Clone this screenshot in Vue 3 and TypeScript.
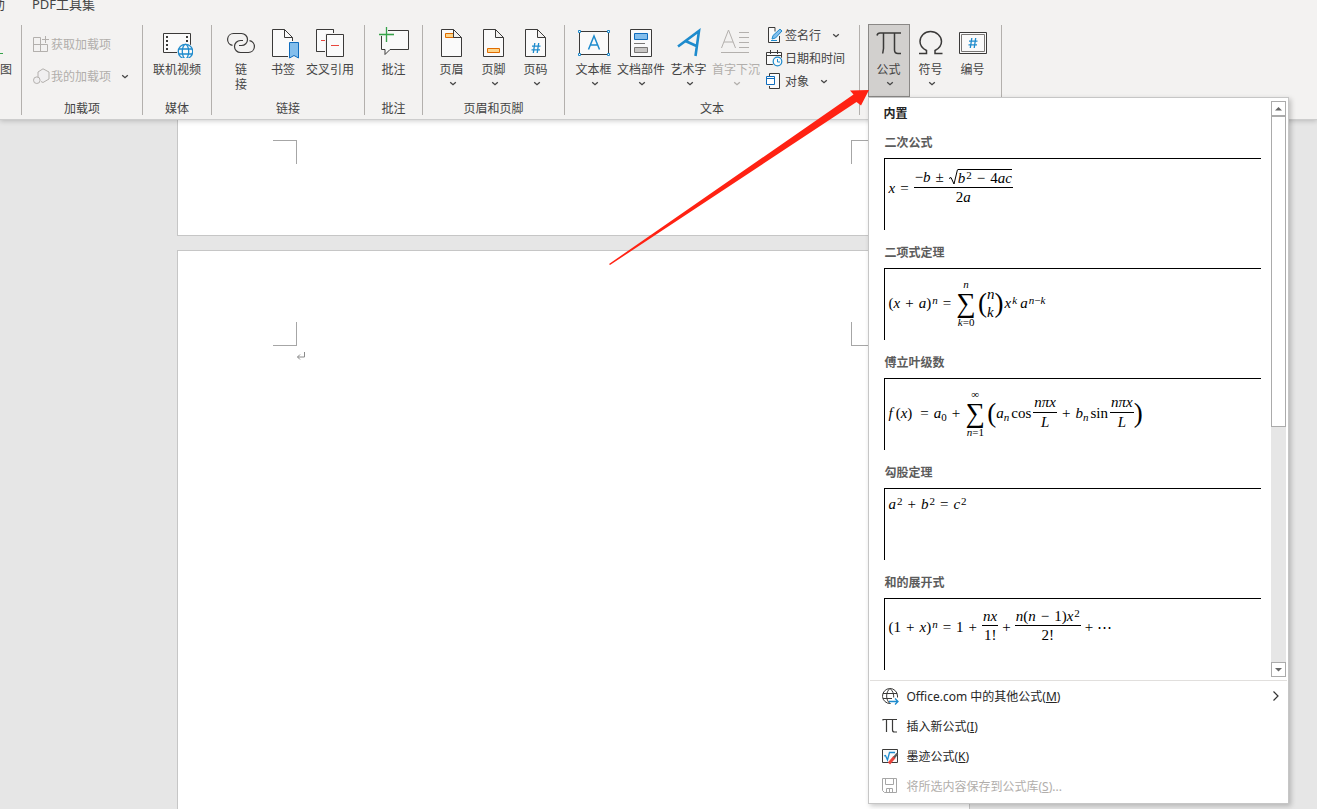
<script setup lang="ts">
import { ref } from 'vue'

interface Tool {
  id: string
  label: string
  size: 's' | 'm' | 'l' | 'xl'
  arrow?: boolean
  disabled?: boolean
  wrap?: boolean
}
interface RowTool {
  id: string
  label: string
  arrow?: boolean
  disabled?: boolean
}
interface Group {
  name: string
  kind: string
  tools: Tool[]
  rows: RowTool[]
}

const groups: Group[] = [
  {
    name: '加载项',
    kind: 'addins',
    tools: [],
    rows: [
      { id: 'store', label: '获取加载项', disabled: true },
      { id: 'myaddins', label: '我的加载项', disabled: true, arrow: true },
    ],
  },
  { name: '媒体', kind: 'media', tools: [{ id: 'video', label: '联机视频', size: 'xl' }], rows: [] },
  {
    name: '链接',
    kind: 'links',
    tools: [
      { id: 'link', label: '链接', size: 's', wrap: true },
      { id: 'bookmark', label: '书签', size: 's' },
      { id: 'crossref', label: '交叉引用', size: 'xl' },
    ],
    rows: [],
  },
  { name: '批注', kind: 'comments', tools: [{ id: 'comment', label: '批注', size: 's' }], rows: [] },
  {
    name: '页眉和页脚',
    kind: 'headers',
    tools: [
      { id: 'header', label: '页眉', size: 's', arrow: true },
      { id: 'footer', label: '页脚', size: 's', arrow: true },
      { id: 'pageno', label: '页码', size: 's', arrow: true },
    ],
    rows: [],
  },
  {
    name: '文本',
    kind: 'text',
    tools: [
      { id: 'textbox', label: '文本框', size: 'm', arrow: true },
      { id: 'parts', label: '文档部件', size: 'l', arrow: true },
      { id: 'wordart', label: '艺术字', size: 'm', arrow: true },
      { id: 'dropcap', label: '首字下沉', size: 'l', arrow: true, disabled: true },
    ],
    rows: [
      { id: 'signature', label: '签名行', arrow: true },
      { id: 'datetime', label: '日期和时间' },
      { id: 'object', label: '对象', arrow: true },
    ],
  },
]

const symbolTools: Tool[] = [
  { id: 'omega', label: '符号', size: 's', arrow: true },
  { id: 'number', label: '编号', size: 's' },
]

const open = ref(true)
</script>

<template>
  <div class="app">
    <svg class="defs" aria-hidden="true">
      <symbol id="i-store" viewBox="0 0 17 17">
        <g fill="none" stroke="#b3b0ad">
          <path d="M.5 1.5h7v14h-7zM.5 8.5h14v7h-14zM12.5 0v7M9 3.5h7" />
        </g>
      </symbol>
      <symbol id="i-myaddins" viewBox="0 0 17 17">
        <g fill="#f0eff0" stroke="#b3b0ad">
          <path d="M5 9V4l5-3.2 6 3.2v7l-6 3.5-2-1" />
          <circle cx="3.8" cy="12.2" r="3.3" />
        </g>
      </symbol>
      <symbol id="i-video" viewBox="0 0 32 32">
        <path d="M2.5 7.5h27v19h-27z" fill="#fafafa" stroke="#3b3a39" />
        <path d="M6 10v16M26 10v8" fill="none" stroke="#3b3a39" stroke-width="2" stroke-dasharray="2 2" />
        <circle cx="24.5" cy="25.5" r="8.6" fill="#f3f2f1" />
        <g fill="#fafafa" stroke="#1e8bcd" stroke-width="1.3">
          <circle cx="24.5" cy="25.5" r="7.2" />
          <ellipse cx="24.5" cy="25.5" rx="3.2" ry="7.2" />
          <path d="M18 23h13M18 28h13" />
        </g>
      </symbol>
      <symbol id="i-link" viewBox="0 0 32 32">
        <g fill="none" stroke="#3b3a39" stroke-width="1.2">
          <path d="M7.5 19.4A6 6 0 0 1 8.5 7.5h8a6 6 0 0 1 0 12H14" />
          <path d="M24.5 14.6a6 6 0 0 1-1 11.9h-8a6 6 0 0 1 0-12H18" />
        </g>
      </symbol>
      <symbol id="i-bookmark" viewBox="0 0 32 32" overflow="visible">
        <path d="M5.5 3.5h12l8 8v19h-20z" fill="#fafafa" />
        <path d="M21 30.5H5.5V3.5h12l8 8V15M17.5 3.5v8h8" fill="none" stroke="#3b3a39" />
        <path d="M22.5 16.5h9V32l-4.500-2.500-4.500 2.500z" fill="#83beec" stroke="#0f6cbd" />
      </symbol>
      <symbol id="i-crossref" viewBox="0 0 32 32">
        <path d="M2.5 3.5h17v22h-17z" fill="#fafafa" stroke="#3b3a39" />
        <path d="M7 14.5h4" stroke="#e8453c" />
        <path d="M11 7h21v25H11z" fill="#f3f2f1" />
        <path d="M2.5 25.5h8.500M19.5 7V3.5" stroke="#3b3a39" />
        <path d="M12.5 8.5h17v22h-17z" fill="#fafafa" stroke="#3b3a39" />
        <path d="M17 19.5h8" stroke="#e8453c" />
      </symbol>
      <symbol id="i-comment" viewBox="0 0 32 32">
        <path d="M3.5 4.5h27v19H12l-5 5v-5H3.5z" fill="#fafafa" stroke="#3b3a39" />
        <path d="M1 3h6v-2h3v6h6v3h-6v6H7v-6H1z" fill="#f3f2f1" />
        <path d="M8.5 1v15M1 8.5h15" stroke="#36a34a" stroke-width="1.3" />
      </symbol>
      <symbol id="i-page" viewBox="0 0 32 32">
        <path d="M5.5 3.5h12l8 8v19h-20zM17.5 3.5v8h8" fill="#fafafa" stroke="#3b3a39" />
      </symbol>
      <symbol id="i-hash" viewBox="0 0 10 10">
        <path d="M3.8 0 2.3 10M7.7 0 6.2 10M1 3.2h8.500M.5 6.8H9" fill="none" stroke="#1e8bcd" stroke-width="1.3" />
      </symbol>
      <symbol id="i-header" viewBox="0 0 32 32">
        <use href="#i-page" width="32" height="32" />
        <path d="M9.5 7.5h8v4h-8z" fill="#fdd58b" stroke="#e06c00" />
        <path d="M17.5 4v7.500H22" fill="none" stroke="#3b3a39" />
      </symbol>
      <symbol id="i-footer" viewBox="0 0 32 32">
        <use href="#i-page" width="32" height="32" />
        <path d="M9.5 22.5h12v4h-12z" fill="#fdd58b" stroke="#e06c00" />
      </symbol>
      <symbol id="i-pageno" viewBox="0 0 32 32">
        <use href="#i-page" width="32" height="32" />
        <use href="#i-hash" x="11" y="17" width="10" height="10" />
      </symbol>
      <symbol id="i-textbox" viewBox="0 0 32 32">
        <path d="M1.5 5.5h29v23h-29z" fill="#fafafa" stroke="#3b3a39" />
        <path d="M10.5 23.5 16 10l5.500 13.500M12.5 19h7" fill="none" stroke="#1e8bcd" stroke-width="1.5" />
        <path d="M.5 4.5h2v2h-2zM29.5 4.5h2v2h-2zM.5 27.5h2v2h-2zM29.5 27.5h2v2h-2z" fill="#fff" stroke="#1e8bcd" />
      </symbol>
      <symbol id="i-parts" viewBox="0 0 32 32">
        <path d="M5.5 3.5h21v27h-21z" fill="#fafafa" stroke="#3b3a39" />
        <path d="M9.5 7.5h13v6h-13z" fill="#83beec" stroke="#0f6cbd" />
        <path d="M9 17.5h11" stroke="#797775" />
        <path d="M9.5 21.5h13v5h-13z" fill="#c8c6c4" stroke="#797775" />
      </symbol>
      <symbol id="i-wordart" viewBox="0 0 32 32">
        <path d="M5 20.5 26 5l-3.500 25M12.5 15l11 5" fill="none" stroke="#1e8bcd" stroke-width="2.6" />
      </symbol>
      <symbol id="i-dropcap" viewBox="0 0 32 32">
        <path d="M1.5 22 8.500 4l7 18M4 16h9M19 6.5h10M19 11.5h10M19 16.5h10M19 21.5h10M1 26.5h28" fill="none" stroke="#b3b0ad" />
      </symbol>
      <symbol id="i-signature" viewBox="0 0 17 17">
        <path d="M9 .5H2.500v15h11V9M9 .5v4" fill="#fafafa" stroke="#3b3a39" />
        <path d="M5 13.5h6" stroke="#1e8bcd" />
        <path d="m6 12 1-3.500L14 2l2 2-6.500 7z" fill="#83beec" stroke="#1e8bcd" />
      </symbol>
      <symbol id="i-datetime" viewBox="0 0 17 17">
        <path d="M.5 2.500h15v12H.5zM.5 5.500h15M4.500 0v4M11.500 0v4" fill="#fafafa" stroke="#3b3a39" />
        <circle cx="11.5" cy="11.5" r="5.5" fill="#f3f2f1" />
        <circle cx="11.5" cy="11.5" r="4.3" fill="#fafafa" stroke="#1e8bcd" stroke-width="1.2" />
        <path d="M11.5 9v3H14" fill="none" stroke="#1e8bcd" />
      </symbol>
      <symbol id="i-object" viewBox="0 0 17 17">
        <path d="M3.5 3V.5h10v15h-10V13" fill="#fafafa" stroke="#3b3a39" />
        <path d="M.5 3.500h8v8h-8zM.5 5.500h8" fill="#fff" stroke="#0f6cbd" />
      </symbol>
      <symbol id="i-pi" viewBox="0 0 32 32">
        <path d="M4 9.500q.5-2.500 3-2.500H28M10.5 7.500v15l-.8 5M21.5 7.500V24q0 3.500 3.500 3.500h3" fill="none" stroke="#3b3a39" stroke-width="1.5" />
      </symbol>
      <symbol id="i-omega" viewBox="0 0 32 32">
        <path d="M4 27.500h7.500v-3C7.500 22.500 5 19 5 15.500 5 10 9.500 5.500 15.500 5.500S26.500 10 26.500 15.500c0 3.500-2.500 7-6.500 9v3h7.500" fill="none" stroke="#3b3a39" stroke-width="1.5" />
      </symbol>
      <symbol id="i-number" viewBox="0 0 32 32">
        <path d="M2.5 6.5h27v21h-27z" fill="#fafafa" stroke="#3b3a39" />
        <path d="M4.5 8.5h23v17h-23z" fill="#fafafa" stroke="#797775" />
        <use href="#i-hash" x="11" y="12" width="10" height="10" />
      </symbol>
      <symbol id="i-chev" viewBox="0 0 8 5">
        <path d="M1.2 1.2 4 3.7l2.800-2.500" fill="none" stroke="currentColor" stroke-width="1.3" />
      </symbol>
    </svg>

    <header class="ribbon">
      <nav class="tabs">
        <a class="tab cut" href="#help"><span>助</span></a>
        <a class="tab" href="#pdf">PDF工具集</a>
      </nav>
      <div class="groups">
        <section class="group partial">
          <div class="tools">
            <button class="tool cut-tool" type="button">
              <svg class="big" viewBox="0 0 32 32"><path d="M12 27.5h11" stroke="#36a34a" /></svg>
              <span class="label">图</span>
            </button>
          </div>
        </section>
        <template v-for="g in groups" :key="g.name">
          <i class="sep"></i>
          <section class="group" :class="g.kind" :aria-label="g.name">
            <div class="tools">
              <button
                v-for="t in g.tools"
                :key="t.id"
                class="tool"
                :class="['w-' + t.size, { wrap: t.wrap }]"
                type="button"
                :disabled="t.disabled"
              >
                <svg class="big"><use :href="'#i-' + t.id" /></svg>
                <span class="label">{{ t.label }}</span>
                <svg v-if="t.arrow" class="chev"><use href="#i-chev" /></svg>
              </button>
              <div v-if="g.rows.length" class="rows">
                <button v-for="r in g.rows" :key="r.id" class="row" type="button" :disabled="r.disabled">
                  <svg class="small"><use :href="'#i-' + r.id" /></svg>
                  <span class="label">{{ r.label }}</span>
                  <svg v-if="r.arrow" class="chev"><use href="#i-chev" /></svg>
                </button>
              </div>
            </div>
            <div class="caption">{{ g.name }}</div>
          </section>
        </template>
        <i class="sep"></i>
        <section class="group symbols" aria-label="符号">
          <div class="tools">
            <div class="anchor">
              <button class="tool w-s active" type="button" :aria-expanded="open" @click="open = !open">
                <svg class="big"><use href="#i-pi" /></svg>
                <span class="label">公式</span>
                <svg class="chev"><use href="#i-chev" /></svg>
              </button>

              <div v-if="open" class="menu">
                <div class="gallery">
                  <div class="list">
                    <h2>内置</h2>

                    <h3>二次公式</h3>
                    <div class="eq e1">
                      <div class="math">
                        <em>x</em><b>=</b>
                        <span class="frac">
                          <span class="part"><span>−<em>b</em></span><b>±</b>
                            <svg class="root" viewBox="0 0 9 16"><path d="M0 9.500 2 8.500l3 6.500L8.500.5" fill="none" stroke="#000" /></svg>
                            <span class="under"><span><em>b</em><sup>2</sup></span><b>−</b><span>4<em>ac</em></span></span>
                          </span>
                          <span class="part den">2<em>a</em></span>
                        </span>
                      </div>
                    </div>

                    <h3>二项式定理</h3>
                    <div class="eq e2">
                      <div class="math">
                        <span>(<em>x</em></span><b>+</b><span><em>a</em>)<sup><em>n</em></sup></span><b>=</b>
                        <span class="sum"><em class="lim">n</em><span class="sigma">∑</span><span class="lim"><em>k</em>=0</span></span>
                        <span class="paren open">(</span>
                        <span class="binom"><em>n</em><em>k</em></span>
                        <span class="paren">)</span>
                        <span class="tail"><em>x</em><sup><em>k</em></sup><em>&#8201;a</em><sup><em>n</em>−<em>k</em></sup></span>
                      </div>
                    </div>

                    <h3>傅立叶级数</h3>
                    <div class="eq e3">
                      <div class="math">
                        <span class="fn"><em>f</em>&#8201;(<em>x</em>)</span><b>=</b><span><em>a</em><sub>0</sub></span><b>+</b>
                        <span class="sum"><span class="lim">∞</span><span class="sigma">∑</span><span class="lim"><em>n</em>=1</span></span>
                        <span class="paren open">(</span>
                        <span><em>a</em><sub><em>n</em></sub></span><span class="word">cos</span>
                        <span class="frac"><span class="part"><em>nπx</em></span><span class="part den"><em>L</em></span></span>
                        <b>+</b><span><em>b</em><sub><em>n</em></sub></span><span class="word">sin</span>
                        <span class="frac"><span class="part"><em>nπx</em></span><span class="part den"><em>L</em></span></span>
                        <span class="paren">)</span>
                      </div>
                    </div>

                    <h3>勾股定理</h3>
                    <div class="eq e4">
                      <div class="math">
                        <span><em>a</em><sup>2</sup></span><b>+</b><span><em>b</em><sup>2</sup></span><b>=</b><span><em>c</em><sup>2</sup></span>
                      </div>
                    </div>

                    <h3>和的展开式</h3>
                    <div class="eq e5">
                      <div class="math">
                        <span>(1</span><b>+</b><span><em>x</em>)<sup><em>n</em></sup></span><b>=</b><span>1</span><b>+</b>
                        <span class="frac"><span class="part"><em>nx</em></span><span class="part den">1!</span></span>
                        <b class="thin">+</b>
                        <span class="frac">
                          <span class="part"><span><em>n</em>(<em>n</em></span><b>−</b><span>1)<em>x</em><sup>2</sup></span></span>
                          <span class="part den">2!</span>
                        </span>
                        <b class="thin">+</b><span>⋯</span>
                      </div>
                    </div>
                  </div>
                  <div class="scroll">
                    <button type="button" aria-label="向上"><svg viewBox="0 0 13 13"><path d="M3 8.500h7L6.500 5z" fill="#666" /></svg></button>
                    <div class="thumb"></div>
                    <div class="track"></div>
                    <button type="button" aria-label="向下"><svg viewBox="0 0 13 13"><path d="M3 5h7L6.500 8.500z" fill="#666" /></svg></button>
                  </div>
                </div>

                <div class="commands">
                  <button type="button">
                    <svg viewBox="0 0 17 17">
                      <g fill="none" stroke="#3b3a39">
                        <path d="M15.500 9.500V8a7.500 7.500 0 1 0-7 7.500M8 .5C3.500 4 3.500 12 8 15.500M8 .5c3 2 3.800 6 3.700 9M1 5.500h14M1 10.500h9" />
                      </g>
                      <path d="M7 13.500h9M13 10.500l3 3-3 3" fill="none" stroke="#1e8bcd" stroke-width="1.3" />
                    </svg>
                    <span>Office.com 中的其他公式(<u>M</u>)</span>
                    <svg class="more" viewBox="0 0 8 10"><path d="M1.500.5 6 5 1.500 9.500" fill="none" stroke="#333" stroke-width="1.2" /></svg>
                  </button>
                  <button type="button">
                    <svg viewBox="0 0 17 17"><path d="M1 2.500V1.500h14M4.500 1.500v12.500M10.500 1.500V12q0 2 2 2H15" fill="none" stroke="#3b3a39" stroke-width="1.2" /></svg>
                    <span>插入新公式(<u>I</u>)</span>
                  </button>
                  <button type="button">
                    <svg viewBox="0 0 17 17">
                      <path d="M.5 1.500h15v13H.5z" fill="#fafafa" stroke="#3b3a39" />
                      <path d="m2 8 1.500-.5 2 4.500 2-7.500H13" fill="none" stroke="#1e8bcd" stroke-width="1.3" />
                      <path d="m7 15.500 5.500-6.500" stroke="#e8453c" stroke-width="3" />
                      <path d="m12 9.500 3.500-4" stroke="#5b5a59" stroke-width="2.2" />
                    </svg>
                    <span>墨迹公式(<u>K</u>)</span>
                  </button>
                  <button type="button" disabled>
                    <svg viewBox="0 0 17 17"><path d="M.5.500h14v14H2.500l-2-2zM3.500.5v6h8v-6M4.500 14.500v-4h6v4M7.500 11v3.500" fill="none" stroke="#a6a6a6" /></svg>
                    <span>将所选内容保存到公式库(<u>S</u>)...</span>
                  </button>
                </div>
              </div>
            </div>
            <button v-for="t in symbolTools" :key="t.id" class="tool w-s" type="button">
              <svg class="big"><use :href="'#i-' + t.id" /></svg>
              <span class="label">{{ t.label }}</span>
              <svg v-if="t.arrow" class="chev"><use href="#i-chev" /></svg>
            </button>
          </div>
        </section>
        <i class="sep"></i>
      </div>
    </header>

    <main class="canvas">
      <article class="page first">
        <div class="marks"><i class="mark top left"></i><i class="mark top right"></i></div>
      </article>
      <article class="page second">
        <div class="marks"><i class="mark bottom left"></i><i class="mark bottom right"></i></div>
        <svg class="pilcrow" viewBox="0 0 10 10"><path d="M8.500 1v5H1.500M4 3.500 1.500 6 4 8.500" fill="none" stroke="#8a8a8a" /></svg>
      </article>
    </main>

    <svg class="arrow" viewBox="0 0 262 178" aria-hidden="true">
      <path d="M1 176 245.500 6.500 242 2.500 261 2 253 17.500 248.500 14 2 177z" fill="#ff2213" />
    </svg>
  </div>
</template>

<style>
body {
  margin: 0;
}
</style>

<style scoped>
.app {
  position: relative;
  display: flex;
  flex-direction: column;
  height: 100vh;
  overflow: hidden;
  background: #e6e6e6;
  color: #444;
  font: 12px/16px "Noto Sans", "Noto Sans CJK SC", sans-serif;
}
.defs {
  position: absolute;
  width: 0;
  height: 0;
}
button {
  margin: 0;
  padding: 0;
  border: 0;
  background: none;
  color: inherit;
  font: inherit;
}
button:disabled {
  color: #b1aeab;
}
svg {
  display: block;
  flex: none;
}
.ribbon {
  position: relative;
  z-index: 2;
  height: 119px;
  border-bottom: 1px solid #cdcdcd;
  background: #f3f2f1;
  box-shadow: 0 1px 5px rgba(0, 0, 0, 0.2);
}
.tabs {
  display: flex;
  gap: 27px;
  height: 24px;
  font-size: 13px;
  line-height: 9px;
}
.tab {
  color: #444;
  text-decoration: none;
  white-space: nowrap;
}
.cut {
  display: flex;
  justify-content: flex-end;
  width: 5px;
}
.groups {
  display: flex;
  align-items: flex-start;
}
.sep {
  width: 1px;
  height: 90px;
  margin-top: 1px;
  background: #b3b0ad;
}
.group {
  display: flex;
  flex-direction: column;
  height: 93px;
  box-sizing: border-box;
}
.partial {
  width: 21px;
}
.addins {
  width: 120px;
}
.media {
  width: 68px;
}
.links {
  width: 152px;
}
.comments {
  width: 57px;
}
.headers {
  width: 141px;
}
.text {
  width: 294px;
}
.symbols {
  width: 141px;
}
.tools {
  display: flex;
  flex: 1;
  justify-content: center;
}
.text .tools {
  justify-content: flex-start;
  padding-left: 6px;
}
.caption {
  text-align: center;
}
.tool {
  display: flex;
  flex-direction: column;
  align-items: center;
  height: 73px;
  box-sizing: border-box;
  padding-top: 2px;
  white-space: nowrap;
}
.cut-tool {
  align-items: flex-end;
  width: 12px;
  margin-right: auto;
}
.tool .label {
  margin-top: 4px;
}
.wrap .label {
  width: 12px;
  line-height: 15px;
  white-space: normal;
}
.w-s {
  width: 42px;
}
.w-m {
  width: 45px;
}
.w-l {
  width: 50px;
}
.w-xl {
  width: 52px;
}
.big {
  width: 32px;
  height: 32px;
  overflow: visible;
}
.small {
  width: 17px;
  height: 17px;
}
.chev {
  width: 8px;
  height: 5px;
}
.tool .chev {
  margin: 3px 0 0 2px;
}
.rows {
  display: flex;
  flex-direction: column;
  align-items: flex-start;
}
.row {
  display: flex;
  align-items: center;
  white-space: nowrap;
}
.row .chev {
  margin-left: 9px;
  color: #444;
}
.addins .rows {
  width: 98px;
  padding-top: 4px;
}
.addins .row {
  height: 32px;
  gap: 1px;
}
.addins .label,
.commands span {
  padding-top: 2px;
}
.text .rows {
  padding-left: 5px;
}
.text .row {
  height: 23px;
  gap: 2px;
}
.anchor {
  position: relative;
}
.active {
  padding-top: 1px;
  border: 1px solid #8a8886;
  background: #d2d0ce;
}
.menu {
  position: absolute;
  top: 73px;
  left: 0;
  width: 421px;
  box-sizing: border-box;
  border: 1px solid #c6c6c6;
  background: #fff;
  box-shadow: 2px 2px 5px rgba(0, 0, 0, 0.22);
  color: #262626;
}
.gallery {
  display: flex;
  gap: 10px;
  margin: 0 1px;
  padding: 0 1px 0 14px;
  border-bottom: 1px solid #e1dfdd;
}
.list {
  flex: 1;
  padding-bottom: 10px;
}
h2,
h3 {
  margin: 0;
  font-size: 12px;
  line-height: 16px;
}
h2 {
  height: 14px;
  padding-top: 8px;
}
h3 {
  padding: 15px 0 7px 1px;
  color: #5c5c5c;
}
.eq {
  height: 72px;
  box-sizing: border-box;
  border-top: 1px solid #000;
  border-left: 1px solid #000;
  padding-left: 4px;
  color: #000;
  font: 15px/18px "Liberation Serif", serif;
}
.math {
  display: flex;
  align-items: center;
  white-space: nowrap;
}
.e1 .math {
  height: 58px;
}
.e2 .math,
.e3 .math {
  height: 68px;
}
.e4 .math {
  height: 29px;
}
.e5 .math {
  height: 55px;
}
.math b {
  margin: 0 5px;
  font-weight: 400;
}
.math b.thin {
  margin: 0 4px;
}
sup,
sub {
  font-size: 11px;
  line-height: 0;
}
sup {
  padding-left: 1px;
  vertical-align: 4px;
}
sub {
  vertical-align: -3px;
}
.frac {
  display: flex;
  flex-direction: column;
  align-items: stretch;
}
.part {
  display: flex;
  justify-content: center;
  align-items: center;
  height: 19px;
  padding: 0 1px;
}
.den {
  align-items: flex-start;
  height: 21px;
  border-top: 1px solid #000;
}
.root {
  width: 9px;
  height: 16px;
}
.under {
  display: flex;
  height: 15px;
  border-top: 1px solid #000;
  line-height: 16px;
}
.sum {
  display: flex;
  flex-direction: column;
  align-items: center;
  width: 20px;
}
.lim {
  font-size: 11px;
  line-height: 10px;
}
.sigma {
  font-size: 27px;
  line-height: 28px;
}
.paren {
  font-size: 27px;
  line-height: 32px;
}
.open {
  margin-left: 2px;
}
.binom {
  display: flex;
  flex-direction: column;
}
.fn {
  margin-right: 3px;
}
.tail {
  margin-left: 1px;
}
.word {
  margin: 0 2px;
}
.scroll {
  display: flex;
  flex-direction: column;
  width: 15px;
  padding: 3px 0;
}
.scroll button,
.thumb {
  box-sizing: border-box;
  border: 1px solid #ababab;
  background: #fff;
}
.scroll button {
  height: 15px;
}
.scroll svg {
  width: 13px;
  height: 13px;
}
.thumb {
  flex: 310;
}
.track {
  flex: 236;
  background: #e6e6e6;
}
.commands {
  padding-bottom: 2px;
}
.commands button {
  display: flex;
  align-items: center;
  gap: 8px;
  width: 100%;
  height: 30px;
  padding: 0 8px 0 13px;
}
.commands svg {
  width: 17px;
  height: 17px;
}
.commands .more {
  width: 8px;
  height: 10px;
  margin-left: auto;
}
.canvas {
  display: flex;
  flex: 1;
  flex-direction: column;
  gap: 14px;
}
.page {
  width: 793px;
  box-sizing: border-box;
  margin-left: 177px;
  border: 1px solid #c6c6c6;
  background: #fff;
}
.first {
  height: 116px;
  border-top: 0;
  padding: 20px 94px 0 95px;
}
.second {
  flex: 1;
  border-bottom: 0;
  padding: 71px 94px 0 95px;
}
.marks {
  display: flex;
  justify-content: space-between;
}
.mark {
  width: 24px;
  height: 24px;
  box-sizing: border-box;
  border: 0 solid #a6a6a6;
}
.top {
  border-top-width: 1px;
}
.bottom {
  border-bottom-width: 1px;
}
.left {
  border-right-width: 1px;
}
.right {
  border-left-width: 1px;
}
.pilcrow {
  width: 10px;
  height: 10px;
  margin: 5px 0 0 23px;
}
.arrow {
  position: absolute;
  z-index: 3;
  top: 88px;
  left: 608px;
  width: 262px;
  height: 178px;
  pointer-events: none;
}
</style>
